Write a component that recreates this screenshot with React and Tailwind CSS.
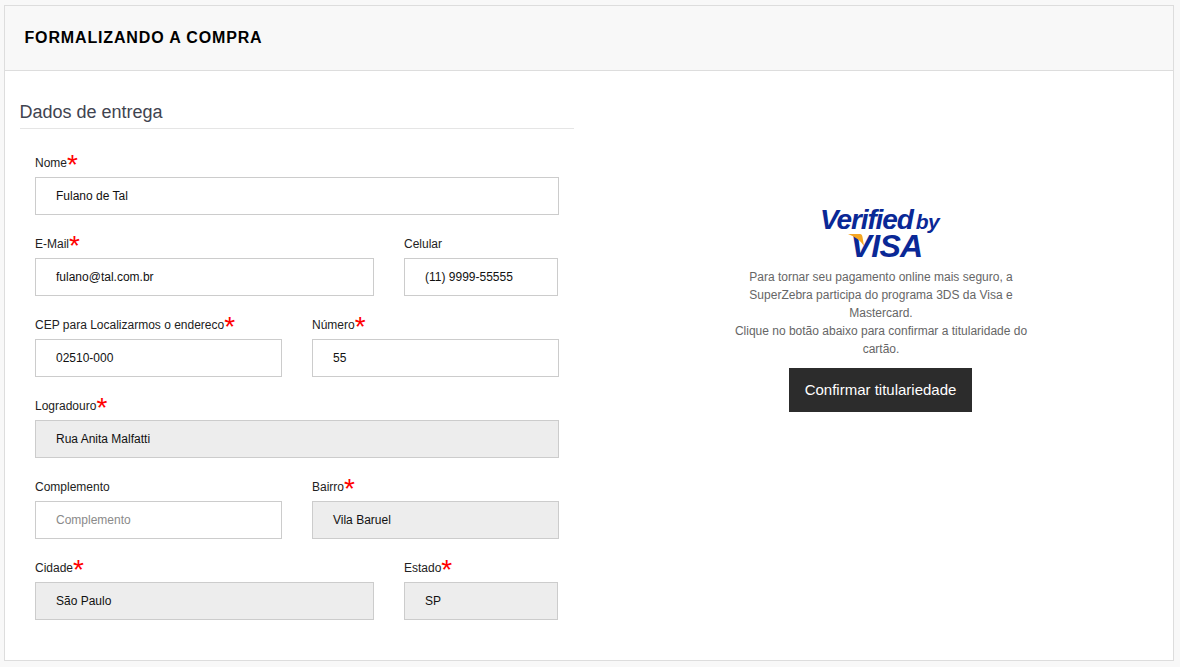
import React from "react";

const font = { fontFamily: '"Liberation Sans", Arial, sans-serif' };

function Field({ label, required, value, placeholder, disabled, className = "" }) {
  return (
    <div className={`flex flex-col ${className}`}>
      <label className="flex h-[20px] items-end text-[12px] leading-[16px] text-[#222]">
        <span className="pb-[1px]">{label}</span>
        {required && (
          <span className="h-[20px] text-[28px] leading-[26px] text-[#ff0000]">*</span>
        )}
      </label>
      <div
        className={`mt-[5px] flex h-[38px] items-center border border-[#cccccc] pl-[20px] text-[12px] ${
          disabled ? "bg-[#ededed]" : "bg-white"
        } ${placeholder ? "text-[#8a8a8a]" : "text-[#111]"}`}
      >
        {value || placeholder}
      </div>
    </div>
  );
}

function VisaLogo() {
  return (
    <div className="mr-[3px] flex flex-col items-center">
      <div className="flex h-[26px] items-baseline font-bold italic leading-[26px] text-[#0a2896]">
        <span className="text-[28px] tracking-[-1.1px]">Verified</span>
        <span className="ml-[3px] text-[21px] tracking-[-0.6px]">by</span>
      </div>
      <div className="relative ml-[11px] flex h-[26px] w-[75px] items-center justify-end">
        <span className="text-[32px] font-bold italic leading-none tracking-[-0.7px] text-[#0a2896]">VISA</span>
        <svg className="absolute left-0 top-[1px]" width="18" height="14" viewBox="0 0 18 14">
          <path d="M0 0 H12 Q14 0 14.5 3 L16 12 Q11 4 0 0 Z" fill="#f5a623" />
        </svg>
      </div>
    </div>
  );
}

export default function App() {
  return (
    <div className="h-[667px] w-[1180px] overflow-hidden bg-[#f8f8f8] pl-[4px] pt-[5px]" style={font}>
      <div className="h-[656px] w-[1170px] border border-[#dddddd] bg-white">
        <header className="flex h-[65px] items-center border-b border-[#dddddd] bg-[#f8f8f8] pl-[19.5px]">
          <h1 className="text-[16px] font-bold tracking-[0.85px] text-black">FORMALIZANDO A COMPRA</h1>
        </header>
        <div className="flex">
          <section className="ml-[14.5px] w-[554.5px] pt-[28px]">
            <h2 className="h-[30px] border-b border-[#e5e5e5] text-[18px] leading-[26px] text-[#3f4450]">
              Dados de entrega
            </h2>
            <div className="flex flex-col gap-[18px] pl-[15.5px] pr-[15px] pt-[23px]">
              <Field label="Nome" required value="Fulano de Tal" />
              <div className="flex gap-[30px]">
                <Field className="w-[339px]" label="E-Mail" required value="fulano@tal.com.br" />
                <Field className="w-[154px]" label="Celular" value="(11) 9999-55555" />
              </div>
              <div className="flex gap-[30px]">
                <Field className="w-[247px]" label="CEP para Localizarmos o endereco" required value="02510-000" />
                <Field className="w-[247px]" label="Número" required value="55" />
              </div>
              <Field label="Logradouro" required value="Rua Anita Malfatti" disabled />
              <div className="flex gap-[30px]">
                <Field className="w-[247px]" label="Complemento" placeholder="Complemento" />
                <Field className="w-[247px]" label="Bairro" required value="Vila Baruel" disabled />
              </div>
              <div className="flex gap-[30px]">
                <Field className="w-[339px]" label="Cidade" required value="São Paulo" disabled />
                <Field className="w-[154px]" label="Estado" required value="SP" disabled />
              </div>
            </div>
          </section>
          <aside className="ml-[157px] flex w-[300px] flex-col items-center pt-[136px]">
            <VisaLogo />
            <p className="mt-[9px] text-center text-[12px] leading-[18px] text-[#666]">
              Para tornar seu pagamento online mais seguro, a SuperZebra participa do programa 3DS da Visa e Mastercard.
              <br />
              Clique no botão abaixo para confirmar a titularidade do cartão.
            </p>
            <button className="mr-[1px] mt-[10px] h-[44px] w-[183px] bg-[#2c2c2c] text-[15px] text-white">
              Confirmar titulariedade
            </button>
          </aside>
        </div>
      </div>
    </div>
  );
}
